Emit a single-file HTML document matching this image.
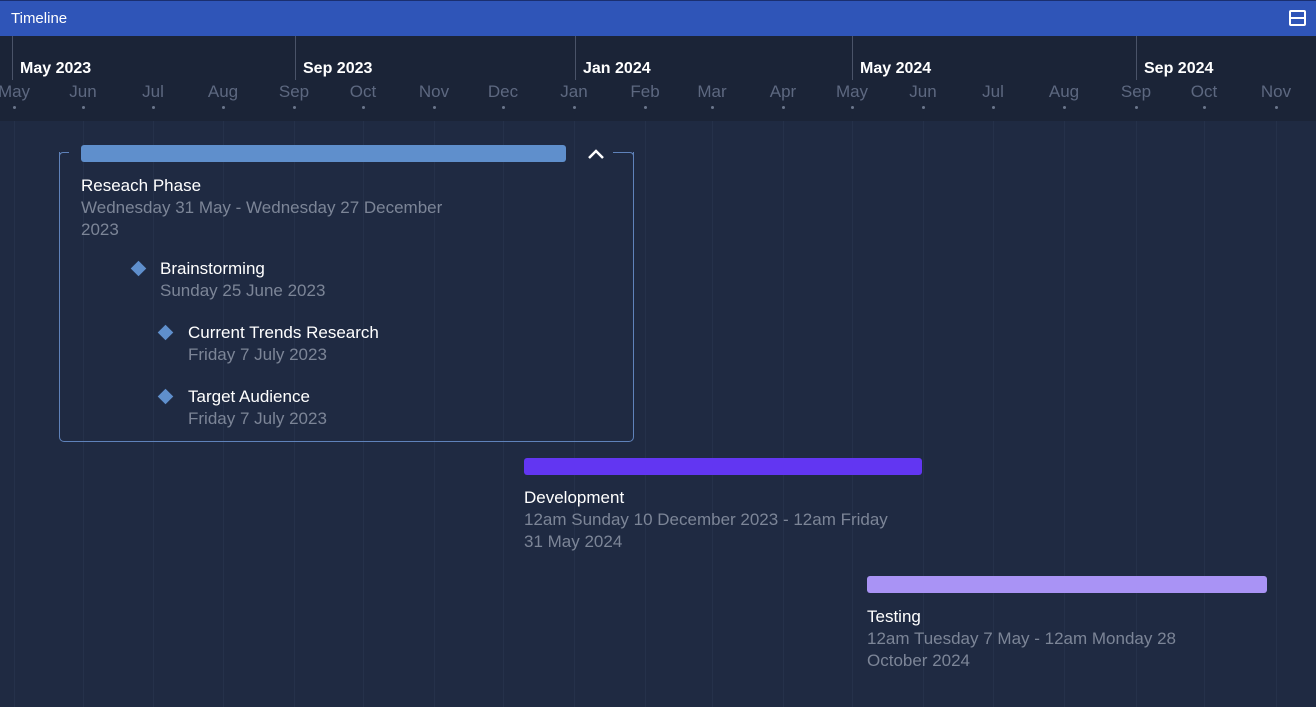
<!DOCTYPE html>
<html><head><meta charset="utf-8"><style>
*{margin:0;padding:0;box-sizing:border-box}
body{width:1316px;height:707px;overflow:hidden;background:#1f2a42;font-family:"Liberation Sans",sans-serif;position:relative}
.top{position:absolute;left:0;top:0;width:1316px;height:36px;background:#2f55b8;border-top:1px solid #1a2f70;color:#fff;font-size:15px;line-height:35px;padding-left:11px}
.hdr{position:absolute;left:0;top:36px;width:1316px;height:85px;background:#1b2437}
.a{position:absolute;white-space:nowrap}
.maj{position:absolute;top:36px;width:1px;height:44px;background:#4a5368}
.ml{position:absolute;top:60px;color:#fff;font-size:16px;font-weight:bold}
.mn{position:absolute;top:82px;color:#5d6880;font-size:17px;transform:translateX(-50%)}
.dot{position:absolute;top:106px;width:3px;height:3px;border-radius:50%;background:#6b768c}
.g{position:absolute;top:121px;width:1px;height:586px;background:#25314a}
.t{color:#fff;font-size:17px}
.d{color:#7c8597;font-size:17px;line-height:22px}
.dia{position:absolute;width:11px;height:11px;background:#5f8fcc;transform:rotate(45deg)}
</style></head><body>
<div class="top">Timeline</div>
<svg class="a" style="left:1289px;top:10px" width="17" height="16"><rect x="1" y="1" width="15" height="14" rx="1" fill="none" stroke="#fff" stroke-width="2"/><line x1="1" y1="8" x2="16" y2="8" stroke="#fff" stroke-width="2"/></svg>
<div class="hdr"></div>
<div class="maj" style="left:12px"></div><div class="ml" style="left:20px">May 2023</div>
<div class="maj" style="left:295px"></div><div class="ml" style="left:303px">Sep 2023</div>
<div class="maj" style="left:575px"></div><div class="ml" style="left:583px">Jan 2024</div>
<div class="maj" style="left:852px"></div><div class="ml" style="left:860px">May 2024</div>
<div class="maj" style="left:1136px"></div><div class="ml" style="left:1144px">Sep 2024</div>
<div class="mn" style="left:14px">May</div><div class="dot" style="left:13px"></div><div class="g" style="left:14px"></div>
<div class="mn" style="left:83px">Jun</div><div class="dot" style="left:82px"></div><div class="g" style="left:83px"></div>
<div class="mn" style="left:153px">Jul</div><div class="dot" style="left:152px"></div><div class="g" style="left:153px"></div>
<div class="mn" style="left:223px">Aug</div><div class="dot" style="left:222px"></div><div class="g" style="left:223px"></div>
<div class="mn" style="left:294px">Sep</div><div class="dot" style="left:293px"></div><div class="g" style="left:294px"></div>
<div class="mn" style="left:363px">Oct</div><div class="dot" style="left:362px"></div><div class="g" style="left:363px"></div>
<div class="mn" style="left:434px">Nov</div><div class="dot" style="left:433px"></div><div class="g" style="left:434px"></div>
<div class="mn" style="left:503px">Dec</div><div class="dot" style="left:502px"></div><div class="g" style="left:503px"></div>
<div class="mn" style="left:574px">Jan</div><div class="dot" style="left:573px"></div><div class="g" style="left:574px"></div>
<div class="mn" style="left:645px">Feb</div><div class="dot" style="left:644px"></div><div class="g" style="left:645px"></div>
<div class="mn" style="left:712px">Mar</div><div class="dot" style="left:711px"></div><div class="g" style="left:712px"></div>
<div class="mn" style="left:783px">Apr</div><div class="dot" style="left:782px"></div><div class="g" style="left:783px"></div>
<div class="mn" style="left:852px">May</div><div class="dot" style="left:851px"></div><div class="g" style="left:852px"></div>
<div class="mn" style="left:923px">Jun</div><div class="dot" style="left:922px"></div><div class="g" style="left:923px"></div>
<div class="mn" style="left:993px">Jul</div><div class="dot" style="left:992px"></div><div class="g" style="left:993px"></div>
<div class="mn" style="left:1064px">Aug</div><div class="dot" style="left:1063px"></div><div class="g" style="left:1064px"></div>
<div class="mn" style="left:1136px">Sep</div><div class="dot" style="left:1135px"></div><div class="g" style="left:1136px"></div>
<div class="mn" style="left:1204px">Oct</div><div class="dot" style="left:1203px"></div><div class="g" style="left:1204px"></div>
<div class="mn" style="left:1276px">Nov</div><div class="dot" style="left:1275px"></div><div class="g" style="left:1276px"></div>

<div class="a" style="left:59px;top:152px;width:575px;height:290px;border:1px solid #5f82ba;border-top:none;border-radius:0 0 5px 5px"></div>
<div class="a" style="left:59px;top:152px;width:10px;height:6px;border-top:1px solid #5f82ba;border-left:1px solid #5f82ba;border-radius:4px 0 0 0"></div>
<div class="a" style="left:613px;top:152px;width:21px;height:6px;border-top:1px solid #5f82ba;border-right:1px solid #5f82ba;border-radius:0 4px 0 0"></div>
<div class="a" style="left:81px;top:145px;width:485px;height:17px;background:#5f8fcc;border-radius:3px"></div>
<svg class="a" style="left:586px;top:147px" width="20" height="14"><path d="M3 11 L10 4 L17 11" fill="none" stroke="#fff" stroke-width="2.5"/></svg>
<div class="a t" style="left:81px;top:176px">Reseach Phase</div>
<div class="a d" style="left:81px;top:197px;white-space:normal;width:400px">Wednesday 31 May - Wednesday 27 December 2023</div>
<div class="dia" style="left:133px;top:263px"></div>
<div class="a t" style="left:160px;top:259px">Brainstorming</div>
<div class="a d" style="left:160px;top:280px">Sunday 25 June 2023</div>
<div class="dia" style="left:160px;top:327px"></div>
<div class="a t" style="left:188px;top:323px">Current Trends Research</div>
<div class="a d" style="left:188px;top:344px">Friday 7 July 2023</div>
<div class="dia" style="left:160px;top:391px"></div>
<div class="a t" style="left:188px;top:387px">Target Audience</div>
<div class="a d" style="left:188px;top:408px">Friday 7 July 2023</div>

<div class="a" style="left:524px;top:458px;width:398px;height:17px;background:#6236f2;border-radius:3px"></div>
<div class="a t" style="left:524px;top:488px">Development</div>
<div class="a d" style="left:524px;top:509px;white-space:normal;width:375px">12am Sunday 10 December 2023 - 12am Friday 31 May 2024</div>

<div class="a" style="left:867px;top:576px;width:400px;height:17px;background:#a993f5;border-radius:3px"></div>
<div class="a t" style="left:867px;top:607px">Testing</div>
<div class="a d" style="left:867px;top:628px;white-space:normal;width:330px">12am Tuesday 7 May - 12am Monday 28 October 2024</div>
</body></html>
